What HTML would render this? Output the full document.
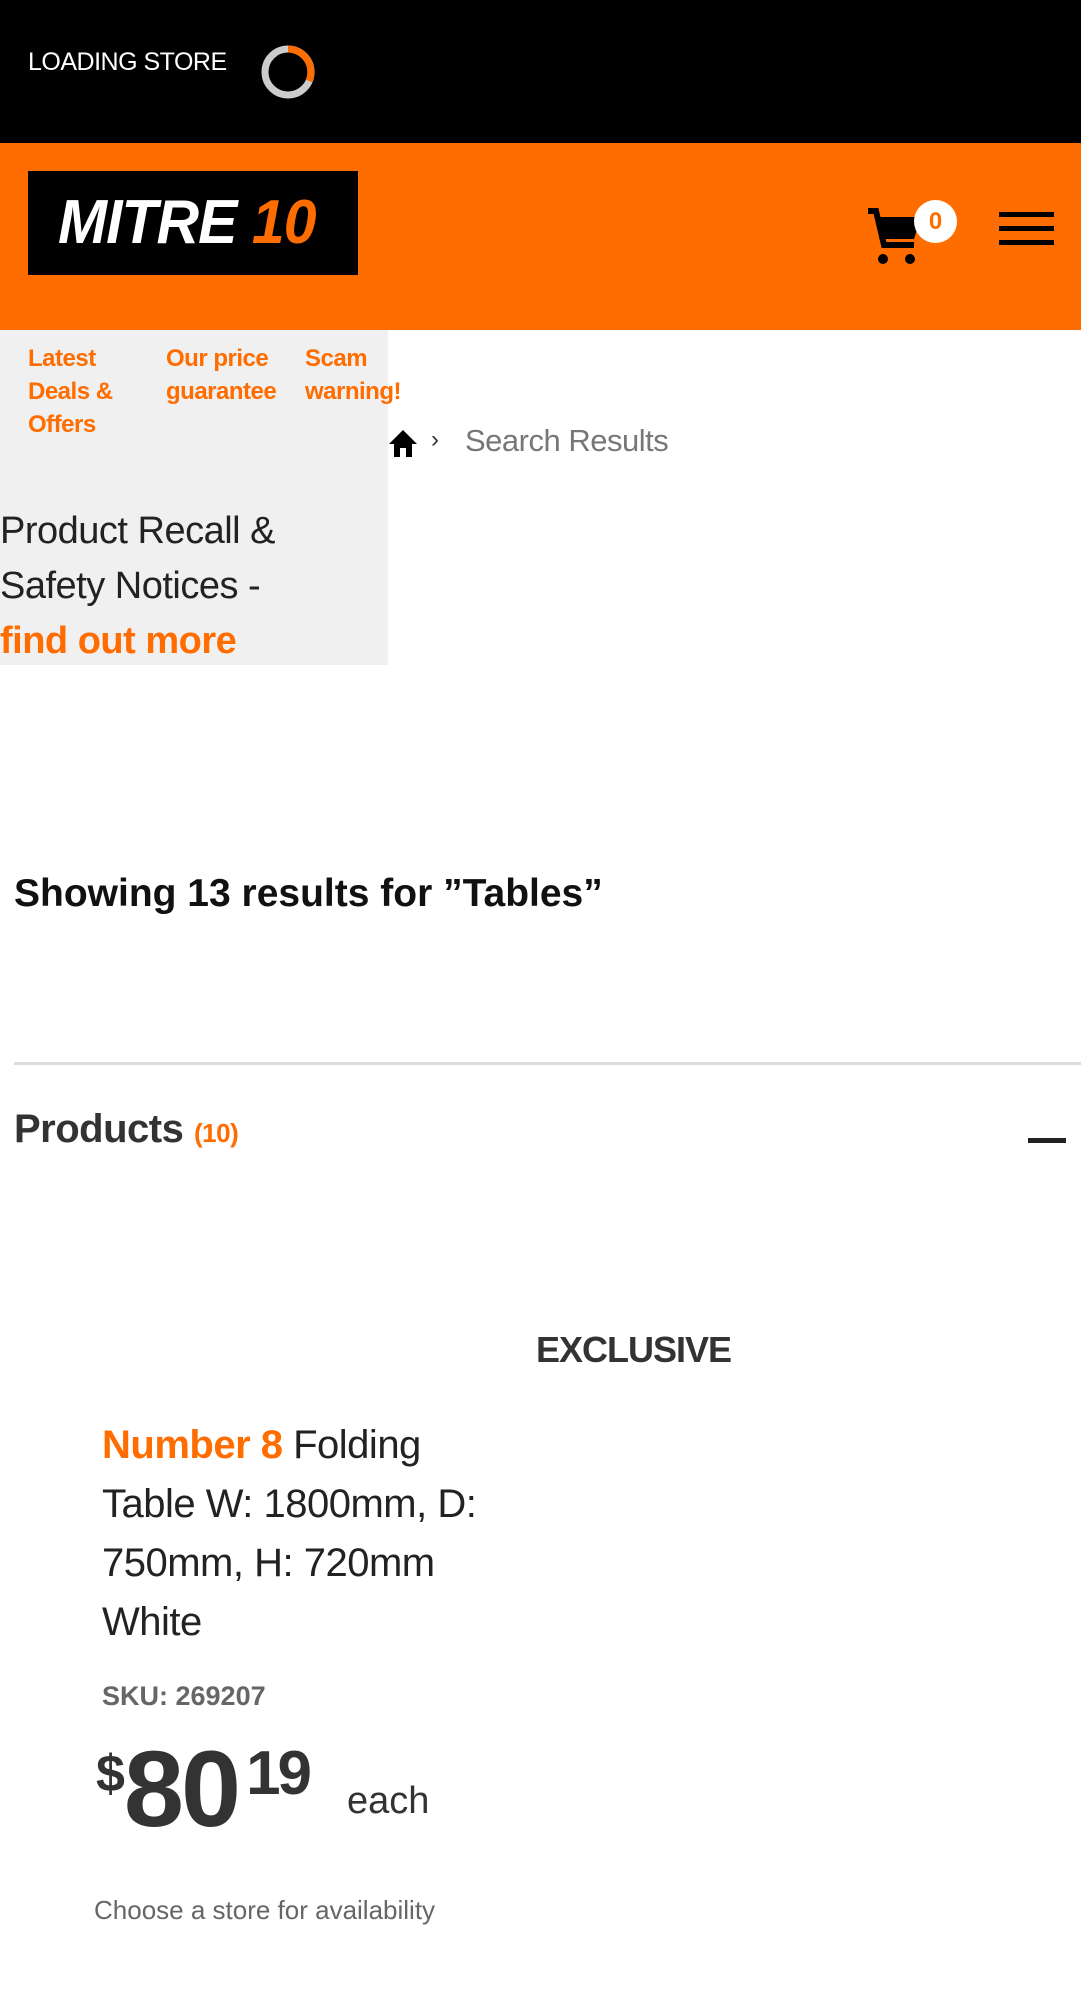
<!DOCTYPE html>
<html><head><meta charset="utf-8"><style>
*{margin:0;padding:0;box-sizing:border-box}
body{width:1081px;height:1999px;background:#fff;font-family:"Liberation Sans",sans-serif;position:relative;overflow:hidden;color:#222}
.a{position:absolute;white-space:nowrap}
.or{color:#ff6c00}
</style></head><body>
<div class="a" style="left:0;top:0;width:1081px;height:143px;background:#000"></div>
<div class="a" style="left:28px;top:48px;color:#fff;font-size:25px;letter-spacing:-.5px">LOADING STORE</div>
<svg class="a" style="left:260px;top:44px" width="56" height="56" viewBox="0 0 56 56"><circle cx="28" cy="28" r="23" fill="none" stroke="#ccc" stroke-width="7"/><path d="M28 5 A23 23 0 0 1 49 37" fill="none" stroke="#ff6c00" stroke-width="7"/></svg>
<div class="a" style="left:0;top:143px;width:1081px;height:187px;background:#ff6c00"></div>
<div class="a" style="left:28px;top:171px;width:330px;height:104px;background:#000"></div>
<div class="a" style="left:58px;top:193px;color:#fff;font-size:62px;font-weight:bold;font-style:italic;letter-spacing:-1px;transform:scaleX(.95);transform-origin:left;line-height:60px">MITRE <span class="or">10</span></div>
<svg class="a" style="left:866px;top:205px" width="60" height="62" viewBox="0 0 60 62"><path d="M2 6 H10 L18 40 H48" fill="none" stroke="#000" stroke-width="6"/><path d="M12 12 H55 L48 34 H17Z" fill="#000"/><circle cx="17" cy="54" r="5" fill="#000"/><circle cx="44" cy="54" r="5" fill="#000"/></svg>
<div class="a" style="left:914px;top:200px;width:43px;height:43px;border-radius:50%;background:#fff;color:#ff6c00;font-weight:bold;font-size:24px;text-align:center;line-height:43px">0</div>
<div class="a" style="left:999px;top:212px;width:55px;height:5px;background:#000"></div>
<div class="a" style="left:999px;top:226px;width:55px;height:5px;background:#000"></div>
<div class="a" style="left:999px;top:240px;width:55px;height:5px;background:#000"></div>
<div class="a" style="left:0;top:330px;width:388px;height:335px;background:#f0f0f0"></div>
<div class="a or" style="left:28px;top:342px;font-size:24px;font-weight:bold;line-height:33px;letter-spacing:-.5px">Latest<br>Deals &amp;<br>Offers</div>
<div class="a or" style="left:166px;top:342px;font-size:24px;font-weight:bold;line-height:33px;letter-spacing:-.5px">Our price<br>guarantee</div>
<div class="a or" style="left:305px;top:342px;font-size:24px;font-weight:bold;line-height:33px;letter-spacing:-.5px">Scam<br>warning!</div>
<svg class="a" style="left:388px;top:428px" width="30" height="30" viewBox="0 0 30 30"><path d="M15 2 L29 16 H24 V29 H18 V20 H12 V29 H6 V16 H1Z" fill="#000"/></svg>
<div class="a" style="left:431px;top:426px;font-size:24px;color:#333">›</div>
<div class="a" style="left:465px;top:423px;font-size:31px;color:#777;letter-spacing:-.5px">Search Results</div>
<div class="a" style="left:0;top:504px;font-size:38px;line-height:55px;color:#222;letter-spacing:-.5px">Product Recall &amp;<br>Safety Notices -<br><b class="or">find out more</b></div>
<div class="a" style="left:14px;top:872px;font-size:39px;font-weight:bold;color:#111">Showing 13 results for ”Tables”</div>
<div class="a" style="left:14px;top:1062px;width:1067px;height:3px;background:#ddd"></div>
<div class="a" style="left:14px;top:1107px;font-size:40px;font-weight:bold;color:#333;letter-spacing:-.5px">Products <span class="or" style="font-size:26px">(10)</span></div>
<div class="a" style="left:1028px;top:1138px;width:38px;height:5px;background:#222"></div>
<div class="a" style="left:536px;top:1329px;font-size:36px;font-weight:bold;color:#333;letter-spacing:-1px">EXCLUSIVE</div>
<div class="a" style="left:102px;top:1416px;font-size:40px;line-height:59px;color:#222;letter-spacing:-.5px"><b class="or">Number 8</b> Folding<br>Table W: 1800mm, D:<br>750mm, H: 720mm<br>White</div>
<div class="a" style="left:102px;top:1681px;font-size:27px;font-weight:bold;color:#666">SKU: 269207</div>
<div class="a" style="left:96px;top:1734px;color:#333;font-weight:bold;letter-spacing:-3px"><span style="font-size:52px;vertical-align:top;position:relative;top:10px">$</span><span style="font-size:108px;line-height:110px;margin-left:2px">80</span><span style="font-size:62px;vertical-align:top;position:relative;top:4px;margin-left:8px">19</span></div>
<div class="a" style="left:347px;top:1780px;font-size:38px;color:#333">each</div>
<div class="a" style="left:94px;top:1895px;font-size:26px;color:#666">Choose a store for availability</div>
</body></html>
